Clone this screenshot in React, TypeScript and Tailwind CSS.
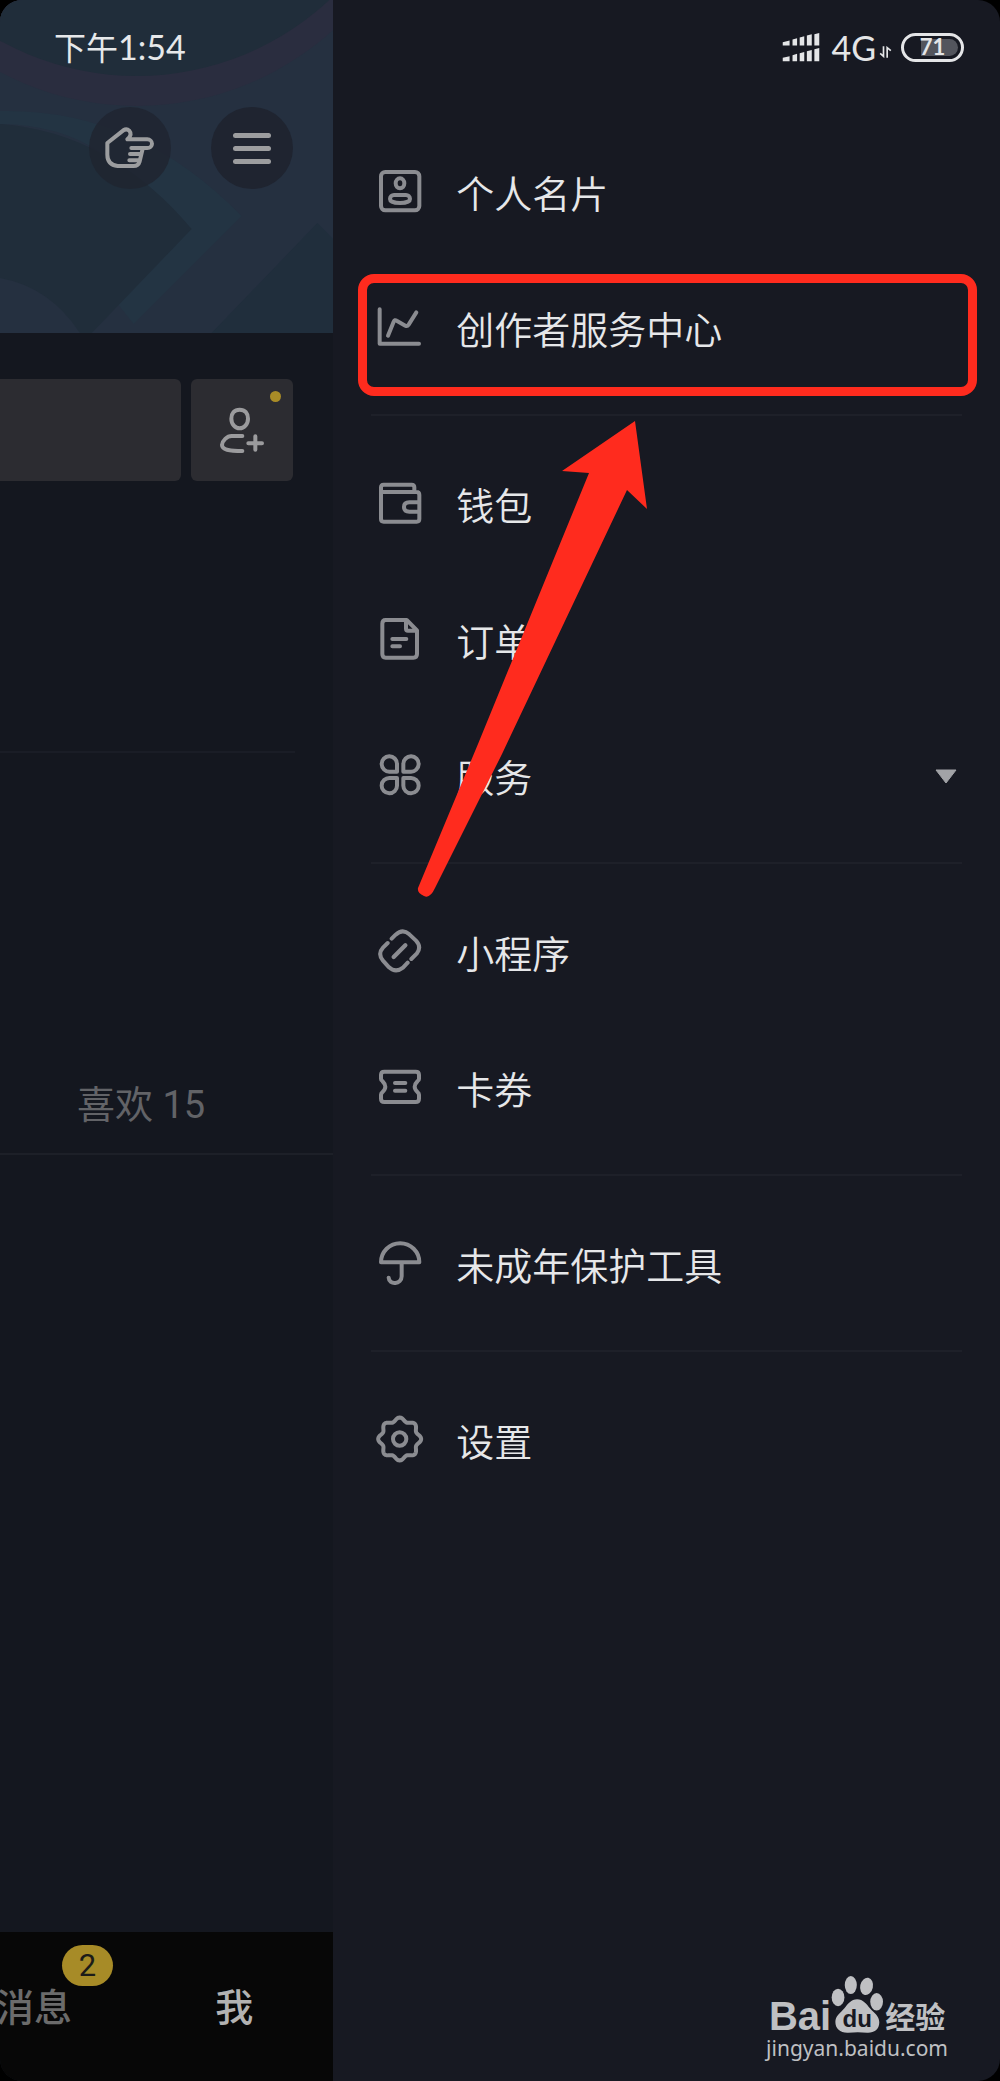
import type { ReactNode } from "react";

const gearPath =
  Array.from({ length: 128 }, (_, i) => {
    const a = (i / 128) * Math.PI * 2;
    const r = 59 + 5.5 * Math.cos(8 * a);
    return `${i === 0 ? "M" : "L"}${(152 + r * Math.cos(a)).toFixed(1)} ${(711 + r * Math.sin(a)).toFixed(1)}`;
  }).join("") + "Z";

type Item = { label: string; viewBox: string; icon: ReactNode; expandable?: boolean; marked?: boolean };

const groups: Item[][] = [
  [
    {
      label: "个人名片",
      viewBox: "81 78 144 144",
      icon: (
        <>
          <rect x="96" y="93" width="115" height="115" rx="13" />
          <ellipse cx="153" cy="127" rx="13" ry="15" />
          <path d="M135 162h36c6 0 12 4 12 12 0 16-60 16-60 0 0-8 6-12 12-12z" />
        </>
      ),
    },
    {
      label: "创作者服务中心",
      marked: true,
      viewBox: "81 486 144 144",
      icon: <path d="M92 505v103h118M117 584l17-42q3-7 9-3l26 15q6 3 10-3l23-37" />,
    },
  ],
  [
    {
      label: "钱包",
      viewBox: "81 121 144 144",
      icon: (
        <path d="M96 160v-14q0-8 8-8h84q8 0 8 8v14M96 160h106q9 0 9 9v72q0 8-8 8H104q-8 0-8-8zM211 191h-30q-16 0-16 14t16 14h30" />
      ),
    },
    {
      label: "订单",
      viewBox: "81 528 144 144",
      icon: (
        <path d="M110 543h63l31 31v71q0 11-11 11H110q-10 0-10-11v-91q0-11 10-11zM171 545v24q0 6 6 6h24M130 600h42M130 622h23" />
      ),
    },
    {
      label: "服务",
      expandable: true,
      viewBox: "81 936 144 144",
      icon: (
        <path d="M144 998h-22a23 23 0 1 1 22-23zM163 998h22a23 23 0 1 0-22-23zM144 1017h-22a23 23 0 1 0 22 23zM163 1017h22a23 23 0 1 1-22 23z" />
      ),
    },
  ],
  [
    {
      label: "小程序",
      viewBox: "81 76 144 144",
      icon: (
        <>
          <path d="M128 111l12-12q21-19 41-1l20 19q18 19 2 39l-16 16M176 183l-14 15q-22 17-42-1l-18-20q-17-20 0-39l14-14" />
          <path d="M134 166l35-35" strokeWidth="13" />
        </>
      ),
    },
    {
      label: "卡券",
      viewBox: "81 486 144 144",
      icon: (
        <path d="M106 512h94q10 0 10 10v12q0 4-4 6-18 18 0 34 4 3 4 7v12q0 10-10 10H106q-10 0-10-10v-12q0-4 4-7 18-16 0-34-4-2-4-6v-12q0-10 10-10zM138 546h31M138 569h31" />
      ),
    },
  ],
  [
    {
      label: "未成年保护工具",
      viewBox: "81 117 144 144",
      icon: <path d="M96 187a57 57 0 0 1 115 0zM158 187v42c0 24-38 28-39 4" />,
    },
  ],
  [
    {
      label: "设置",
      viewBox: "81 639 144 144",
      icon: (
        <>
          <path d={gearPath} />
          <circle cx="152" cy="711" r="20" />
        </>
      ),
    },
  ],
];

function MenuRow({ item }: { item: Item }) {
  return (
    <li className="relative">
      <button type="button" className="flex h-[136px] w-full items-center gap-8 px-[5px] text-left">
        <svg
          viewBox={item.viewBox}
          className="mb-1 size-12 shrink-0"
          fill="none"
          stroke="#8b8c91"
          strokeWidth="12"
          strokeLinecap="round"
          strokeLinejoin="round"
          aria-hidden="true"
        >
          {item.icon}
        </svg>
        <span className="mb-0.5 flex-1 text-[38px] leading-[56px] font-[350]">{item.label}</span>
        {item.expandable && (
          <svg viewBox="0 0 22 15" className="mb-0.5 h-[15px] w-[22px]" aria-hidden="true">
            <path d="M1 1h20L11 14z" fill="#a2a3a7" stroke="#a2a3a7" strokeLinejoin="round" />
          </svg>
        )}
      </button>
      {item.marked && (
        <div className="pointer-events-none absolute -left-[13px] -right-[15px] top-[13px] bottom-px rounded-2xl border-[9px] border-[#ff2b1e]" />
      )}
    </li>
  );
}

function CoverArt() {
  return (
    <svg viewBox="0 0 334 333" preserveAspectRatio="none" className="absolute inset-0 size-full" aria-hidden="true">
      <rect width="334" height="333" fill="#253040" />
      <circle cx="137" cy="-187" r="293" fill="#2a2d3f" />
      <circle cx="137" cy="-207" r="283" fill="#202d3a" />
      <path d="M0 111Q137 108 242 216L134 324 118 304 170 240Q120 125 0 124z" fill="#233443" />
      <path d="M0 124Q110 132 192 229L92 333H80Q50 287 0 278z" fill="#202d3a" />
      <path d="M318 223l16 16v94H212z" fill="#202e3c" />
    </svg>
  );
}

function ProfilePane() {
  return (
    <div className="flex w-1/3 shrink-0 flex-col overflow-hidden bg-[#14171f]">
      <header className="relative h-[333px]">
        <CoverArt />
        <div className="relative flex h-[107px] items-center pb-[14px] pl-[54px] text-[#e6e8ea]">
          <time className="text-[32px] leading-none">
            下午<span className="font-[Lato] text-[34px] leading-none">1:54</span>
          </time>
        </div>
        <div className="relative flex justify-end gap-10 pr-10">
          <button
            type="button"
            aria-label="戳一戳"
            className="flex size-[82px] items-center justify-center rounded-full bg-[#1f2430]/80"
          >
            <svg
              viewBox="312 362 174 156"
              className="h-[52px] w-[58px]"
              fill="none"
              stroke="#9c9d9f"
              strokeWidth="12"
              strokeLinecap="round"
              strokeLinejoin="round"
              aria-hidden="true"
            >
              <path d="M437 442l-9 38q-4 14-18 14h-48q-31-4-31-34v-35L379 387q10-6 18 1 10 12-6 26h60a14 13 0 0 1 0 26h-48M399 458h33M397 477h31" />
            </svg>
          </button>
          <button
            type="button"
            aria-label="菜单"
            className="flex size-[82px] flex-col items-center justify-center gap-2 rounded-full bg-[#1f2430]"
          >
            <span className="h-[5px] w-[38px] rounded-full bg-[#9c9d9f]" />
            <span className="h-[5px] w-[38px] rounded-full bg-[#9c9d9f]" />
            <span className="h-[5px] w-[38px] rounded-full bg-[#9c9d9f]" />
          </button>
        </div>
      </header>

      <div className="flex gap-[10px] pt-[46px] pr-10">
        <button type="button" aria-label="编辑资料" className="h-[102px] flex-1 rounded-r-md bg-[#2c2c31]" />
        <button
          type="button"
          aria-label="添加朋友"
          className="relative flex size-[102px] items-center justify-center rounded-md bg-[#2c2c31]"
        >
          <svg
            viewBox="653 160 150 150"
            className="size-[50px]"
            fill="none"
            stroke="#9b9b9d"
            strokeWidth="12"
            strokeLinecap="round"
            strokeLinejoin="round"
            aria-hidden="true"
          >
            <path d="M721 174c16 0 25 11 25 27 0 17-12 29-25 29s-25-12-25-29c0-16 9-27 25-27zM729 253h-32c-14 0-28 14-29 27 0 14 20 18 61 18M747 275h41M768 254v40" />
          </svg>
          <span className="absolute top-3 right-3 size-[11px] rounded-full bg-[#a98c27]" />
        </button>
      </div>

      <div className="mr-[38px] h-[272px] border-b-2 border-[#1a1d26]" />
      <div className="flex h-[402px] items-end border-b-2 border-[#1d2028] pb-[22px] pl-[77px]">
        <a href="#likes" className="font-[Roboto,'Noto_Sans_CJK_SC',sans-serif] text-[38px] leading-[52px] text-[#626367]">
          喜欢 15
        </a>
      </div>

      <nav className="mt-auto flex h-[149px] items-center justify-between bg-[#070707] pr-20 pb-1 text-[38px] leading-[56px] font-medium">
        <a href="#messages" className="relative -ml-1 text-[#6b6b6b]">
          消息
          <span className="absolute -top-8 left-[66px] flex h-[41px] w-[51px] items-center justify-center rounded-full bg-[#a78b27] font-[Roboto] text-[31px] leading-none font-normal text-[#1c1b18]">
            2
          </span>
        </a>
        <a href="#me" className="text-[#b2b2b2]">
          我
        </a>
      </nav>
    </div>
  );
}

function StatusIcons() {
  return (
    <div className="flex h-24 items-center justify-end pr-9 text-[#e4e5e7]">
      <svg viewBox="126 98 114 92" className="h-[30px] w-[38px]" fill="currentColor" aria-hidden="true">
        <path d="M127 126l21-5v15h-21zM157 118l14-4v22h-14zM179 112l14-4v28h-14zM201 106l15-4v34h-15zM224 102l15-4v38h-15zM127 174l21-5v16h-21zM157 166l14-4v23h-14zM179 160l14-4v29h-14zM201 154l15-4v35h-15zM224 148l15-4v41h-15z" />
      </svg>
      <span className="ml-[11px] font-[Lato] text-[34px] leading-none">4G</span>
      <svg viewBox="418 142 38 36" className="mt-2 ml-[3px] h-3 w-[13px]" fill="none" stroke="currentColor" strokeWidth="5" aria-hidden="true">
        <path d="M431 143v30l-10-9M442 177v-30l11 9" />
      </svg>
      <div className="relative mb-0.5 ml-[9px] flex h-[29px] w-[63px] items-center justify-center rounded-full border-[3px] border-current">
        <span className="absolute top-[3px] right-[3px] bottom-[3px] left-[17px] rounded-r-full bg-[#53555d]" />
        <span className="relative font-[Lato] text-[22px] leading-none font-bold">71</span>
      </div>
    </div>
  );
}

function Watermark() {
  return (
    <div className="mt-auto flex flex-col items-center self-end pr-[52px] pb-[19px] text-[#bfc0c3]">
      <div className="flex h-[60px] items-end font-['Liberation_Sans'] font-bold">
        <span className="text-[40px] leading-9">Bai</span>
        <svg viewBox="264 104 158 170" className="mb-px h-[57px] w-[53px]" fill="currentColor" aria-hidden="true">
          <ellipse cx="285" cy="168" rx="19" ry="26" />
          <ellipse cx="323" cy="131" rx="18" ry="27" />
          <ellipse cx="370" cy="135" rx="19" ry="26" transform="rotate(12 370 135)" />
          <ellipse cx="400" cy="181" rx="19" ry="26" />
          <path d="M342 173c17 0 28 14 38 27 12 14 28 22 28 42 0 23-17 32-36 31-20-2-36-2-57 0-23 1-38-12-38-32 0-18 14-26 27-41 10-13 20-27 38-27z" />
          <text x="342" y="256" textAnchor="middle" fontSize="72" fontWeight="700" fontFamily="Liberation Sans" fill="#171922">
            du
          </text>
        </svg>
        <span className="mb-[3px] ml-px font-['Noto_Sans_CJK_SC'] text-[30px] leading-8">经验</span>
      </div>
      <span className="font-['Noto_Sans'] text-[21px] leading-7">jingyan.baidu.com</span>
    </div>
  );
}

export default function App() {
  return (
    <div className="bg-black">
      <main className="relative flex min-h-screen overflow-hidden rounded-[22px] font-['Noto_Sans_CJK_SC',sans-serif]">
        <ProfilePane />
        <aside className="flex min-w-0 flex-1 flex-col bg-[#171922] text-[#e6e7e9]">
          <StatusIcons />
          <nav className="px-[38px] pt-2">
            {groups.map((group) => (
              <ul key={group[0].label} className="border-b-2 border-[#1e2029] pt-[21px] pb-[17px] last:border-b-0">
                {group.map((item) => (
                  <MenuRow key={item.label} item={item} />
                ))}
              </ul>
            ))}
          </nav>
          <Watermark />
        </aside>
        <svg
          viewBox="416 420 232 478"
          className="pointer-events-none absolute top-[420px] left-[416px] h-[478px] w-[232px]"
          aria-hidden="true"
        >
          <path
            d="M635 421L562 471 589 473 478 744 418 888Q417 893 424 896 430 899 435 888L502 754 627 490 647 509z"
            fill="#ff2b1e"
          />
        </svg>
      </main>
    </div>
  );
}
